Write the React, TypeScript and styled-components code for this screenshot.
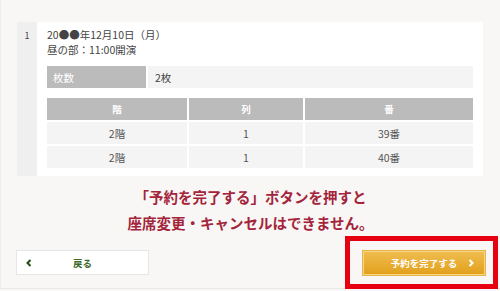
import { Fragment } from "react";
import styled, { createGlobalStyle } from "styled-components";

const GlobalStyle = createGlobalStyle`
  html, body {
    margin: 0;
    padding: 0;
    background: #f8f7f5;
  }
  body {
    font-family: "Noto Sans CJK JP", "Noto Sans", sans-serif;
    color: #333;
  }
`;

const Page = styled.div`
  position: relative;
  width: 500px;
  height: 289px;
  box-sizing: border-box;
  padding-top: 22px;
  border-bottom: 1px solid #ebe9e6;
  border-left: 1px solid #efedea;
`;

const Card = styled.div`
  display: flex;
  width: 466px;
  margin-left: 16px;
  background: #fff;
`;

const NumCol = styled.div`
  width: 20px;
  flex-shrink: 0;
  background: #efefef;
  font-size: 9px;
  text-align: center;
  padding-top: 7px;
  color: #444;
`;

const Body = styled.div`
  flex: 1;
  padding: 5px 10px 8px 10px;
`;

const DateText = styled.div`
  font-size: 10.5px;
  line-height: 15px;
  color: #444;
`;

const CountRow = styled.div`
  display: flex;
  gap: 2px;
  height: 22px;
  margin-top: 9px;
  font-size: 10.5px;
`;

const CountLabel = styled.div`
  width: 99px;
  background: #bbbbbb;
  color: #fff;
  display: flex;
  align-items: center;
  padding-left: 6px;
  box-sizing: border-box;
`;

const CountValue = styled.div`
  flex: 1;
  background: #f4f4f4;
  display: flex;
  align-items: center;
  padding-left: 7px;
  color: #444;
`;

const SeatGrid = styled.div`
  display: grid;
  grid-template-columns: 140px 114px 1fr;
  grid-auto-rows: 22px;
  gap: 2px;
  margin-top: 10px;
`;

const Cell = styled.div<{ $head?: boolean }>`
  display: flex;
  align-items: center;
  justify-content: center;
  font-size: ${(p) => (p.$head ? "9.5px" : "10.5px")};
  font-weight: ${(p) => (p.$head ? "bold" : "normal")};
  background: ${(p) => (p.$head ? "#bbbbbb" : "#f4f4f4")};
  color: ${(p) => (p.$head ? "#fff" : "#555")};
`;

const Notice = styled.p`
  margin: 8px 0 0;
  text-align: center;
  font-size: 14.5px;
  line-height: 26px;
  font-weight: bold;
  color: #a3243b;
`;

const ButtonRow = styled.div`
  display: flex;
  justify-content: space-between;
  margin-top: 14px;
  padding: 0 15px;
`;

const BackButton = styled.button`
  position: relative;
  width: 133px;
  height: 25px;
  background: #fff;
  border: 1px solid #e6e6e6;
  font-family: inherit;
  font-size: 9.5px;
  font-weight: bold;
  color: #3b6a2a;
  padding: 0;
  display: flex;
  align-items: center;
  justify-content: center;
`;

const Chevron = styled.span<{ $side: "left" | "right" }>`
  position: absolute;
  top: 50%;
  ${(p) => (p.$side === "left" ? "left: 9px;" : "right: 10px;")}
  transform: translateY(-50%);
  display: flex;
`;

const SubmitButton = styled.button`
  position: relative;
  width: 122px;
  height: 24px;
  margin-top: 1px;
  background: linear-gradient(#efbc4f, #e2a11d);
  border: 1px solid #f6d78a;
  box-shadow: 0 0 0 1px #e8b341;
  font-family: inherit;
  font-size: 9.5px;
  font-weight: bold;
  color: #fff;
  padding: 0;
  display: flex;
  align-items: center;
  justify-content: center;
`;

const Highlight = styled.div`
  position: absolute;
  left: 344px;
  top: 236px;
  width: 153px;
  height: 53px;
  box-sizing: border-box;
  border: 5px solid #e60012;
  pointer-events: none;
`;

const seats = [
  { floor: "2階", row: "1", num: "39番" },
  { floor: "2階", row: "1", num: "40番" },
];

export default function App() {
  return (
    <>
      <GlobalStyle />
      <Page>
        <Card>
          <NumCol>1</NumCol>
          <Body>
            <DateText>20●●年12月10日（月）</DateText>
            <DateText>昼の部：11:00開演</DateText>
            <CountRow>
              <CountLabel>枚数</CountLabel>
              <CountValue>2枚</CountValue>
            </CountRow>
            <SeatGrid>
              <Cell $head>階</Cell>
              <Cell $head>列</Cell>
              <Cell $head>番</Cell>
              {seats.map((s) => (
                <Fragment key={s.num}>
                  <Cell>{s.floor}</Cell>
                  <Cell>{s.row}</Cell>
                  <Cell>{s.num}</Cell>
                </Fragment>
              ))}
            </SeatGrid>
          </Body>
        </Card>
        <Notice>
          「予約を完了する」ボタンを押すと
          <br />
          座席変更・キャンセルはできません。
        </Notice>
        <ButtonRow>
          <BackButton>
            <Chevron $side="left">
              <svg width="6" height="8" viewBox="0 0 6 8">
                <path d="M4.5 1 L1.5 4 L4.5 7" fill="none" stroke="#1f4d12" strokeWidth="2" />
              </svg>
            </Chevron>
            戻る
          </BackButton>
          <SubmitButton>
            予約を完了する
            <Chevron $side="right">
              <svg width="6" height="8" viewBox="0 0 6 8">
                <path d="M1.5 1 L4.5 4 L1.5 7" fill="none" stroke="#fff" strokeWidth="2" />
              </svg>
            </Chevron>
          </SubmitButton>
        </ButtonRow>
        <Highlight />
      </Page>
    </>
  );
}
